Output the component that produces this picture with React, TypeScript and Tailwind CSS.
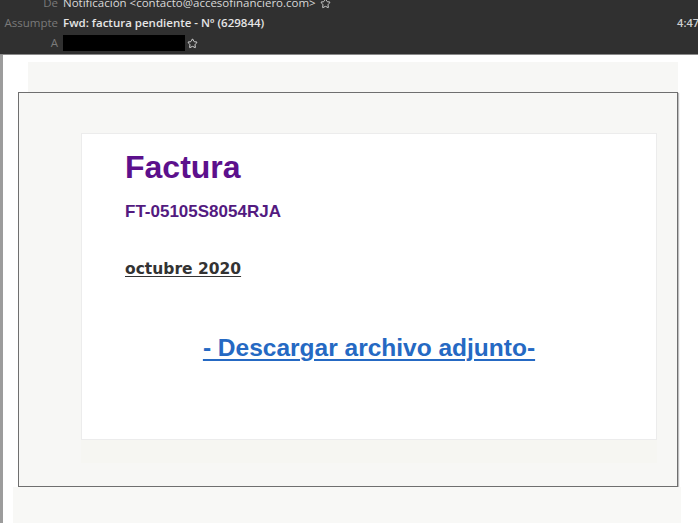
import { Star } from 'lucide-react'

// Mail header row: grey label column, then the value
function HeaderRow({ label, children }: { label: string; children: React.ReactNode }) {
  return (
    <div className="flex h-[20px] items-center">
      <span className="w-[58px] shrink-0 text-right text-[11.5px] text-[#7a7a7a]">{label}</span>
      <div className="ml-[5px] flex flex-1 items-center">{children}</div>
    </div>
  )
}

export default function App() {
  return (
    <div className="w-[698px] h-[523px] overflow-hidden bg-[#fbfbfa] font-['Open_Sans',sans-serif]">
      {/* Mail client header */}
      <header className="h-[55px] overflow-hidden bg-[#303030] border-b border-[#8a8a8a]">
        <div className="-mt-[7px]">
          <HeaderRow label="De">
            <span className="text-[11.5px] text-[#d8d8d8]">Notificación &lt;contacto@accesofinanciero.com&gt;</span>
            <Star className="ml-[4px] text-[#d8d8d8]" size={11} strokeWidth={2} />
          </HeaderRow>
          <HeaderRow label="Assumpte">
            <span className="text-[11.5px] font-semibold text-[#e6e6e6]">Fwd: factura pendiente - Nº (629844)</span>
            <span className="ml-auto text-[11px] font-semibold text-[#d0d0d0] -mr-[1px]">4:47</span>
          </HeaderRow>
          <HeaderRow label="A">
            <span className="h-[16px] w-[122px] bg-black" />
            <Star className="ml-[2px] text-[#e0e0e0]" size={11} strokeWidth={2} />
          </HeaderRow>
        </div>
      </header>

      {/* Message body */}
      <div className="flex h-[468px]">
        <div className="w-[3px] bg-[#9c9c9c]" />
        <div className="flex-1 bg-white">
          <div className="h-[7px]" />
          <div className="ml-[25px] w-[650px] h-[30px] bg-[#f7f7f5]" />
          <div className="ml-[15px] w-[660px] h-[395px] border border-[#6f6f6f] bg-[#f7f7f5] shadow-[1px_1px_1px_rgba(0,0,0,0.25)] pt-[40px] pl-[62px]">
            <div className="w-[576px] h-[307px] bg-white border border-[#ececec] pt-[15px] pl-[43px] font-['Liberation_Sans',Arial,sans-serif]">
              <h1 className="text-[32px] leading-[36px] font-bold text-[#5c108c]">Factura</h1>
              <p className="mt-[17px] text-[17px] leading-[20px] font-bold text-[#531a80]">FT-05105S8054RJA</p>
              <p className="mt-[37px] text-[15.5px] leading-[20px] font-bold text-[#333] underline underline-offset-[2px] font-['DejaVu_Sans',Verdana,sans-serif]">
                octubre 2020
              </p>
              <div className="mt-[55px] -ml-[43px] text-center">
                <a className="text-[24.5px] leading-[28px] font-bold text-[#2569c3] underline underline-offset-[3px] decoration-[2px]">
                  - Descargar archivo adjunto-
                </a>
              </div>
            </div>
            <div className="w-[576px] h-[23px] bg-[#f6f6f2]" />
          </div>
          <div className="ml-[10px] w-[668px] h-[40px] bg-[#f8f8f6]" />
        </div>
      </div>
    </div>
  )
}
